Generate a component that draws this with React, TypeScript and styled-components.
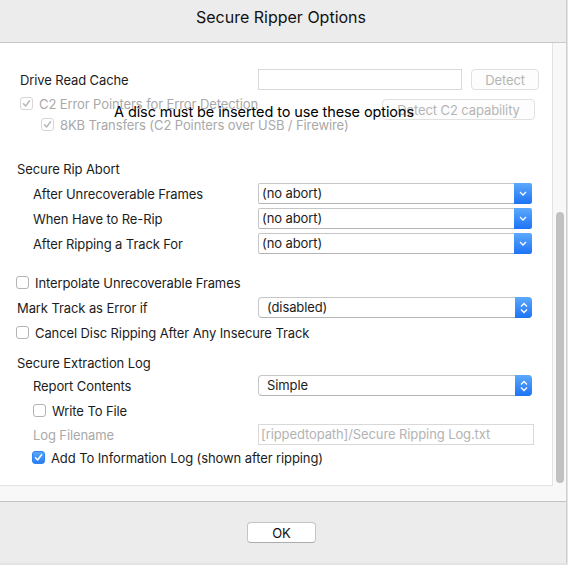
import styled, { createGlobalStyle } from 'styled-components';

const GlobalStyle = createGlobalStyle`
  html, body {
    margin: 0;
    padding: 0;
    background: #e4e4e4;
  }
  body {
    font-family: Inter, "Liberation Sans", sans-serif;
    font-size: 13px;
    letter-spacing: -0.1px;
    color: #1c1c1c;
  }
`

const Window = styled.div`
  width: 566px;
  height: 563px;
  background: #ececec;
  display: flex;
  flex-direction: column;
  box-shadow: 0 1px 0 #a9a9a9, 1px 0 0 #cfcfcf;
`

const TitleBar = styled.div`
  height: 43px;
  box-sizing: border-box;
  border-bottom: 1px solid #c9c9c9;
  display: flex;
  justify-content: center;
  padding: 8px 4px 0 0;
  font-size: 16px;
  line-height: 19px;
  letter-spacing: 0;
  color: #111;
`

const Body = styled.div`
  height: 459px;
  box-sizing: border-box;
  display: flex;
  background: #f8f8f8;
  border-bottom: 1px solid #c4c4c4;
`

const Document = styled.div`
  position: relative;
  width: 553px;
  height: 443px;
  box-sizing: border-box;
  background: #fff;
  border-right: 1px solid #e3e3e3;
  border-bottom: 1px solid #e3e3e3;
  padding-top: 26px;
`

const Track = styled.div`
  flex: 1;
  padding: 169px 0 0 3px;
`

const Knob = styled.div`
  width: 8px;
  height: 271px;
  border-radius: 4px;
  background: #c1c1c1;
`

const Footer = styled.div`
  flex: 1;
  display: flex;
  align-items: center;
  justify-content: center;
  padding-right: 3px;
`

const Row = styled.div<{ $gap?: number }>`
  display: grid;
  grid-template-columns: 258px auto;
  align-items: center;
  height: 21px;
  margin-top: ${({ $gap }) => $gap ?? 4}px;
`

const Label = styled.div<{ $indent: number; $muted?: boolean }>`
  padding-left: ${({ $indent }) => $indent}px;
  color: ${({ $muted }) => ($muted ? '#a9a9a9' : '#1c1c1c')};
  white-space: nowrap;
`

const CheckRow = styled.label<{ $indent: number; $muted?: boolean }>`
  grid-column: 1 / -1;
  display: flex;
  align-items: center;
  gap: 6px;
  padding-left: ${({ $indent }) => $indent}px;
  color: ${({ $muted }) => ($muted ? '#a9a9a9' : '#1c1c1c')};
  white-space: nowrap;
`

const Box = styled.span<{ $checked?: boolean; $muted?: boolean }>`
  width: 13px;
  height: 13px;
  box-sizing: border-box;
  border-radius: 3px;
  display: inline-flex;
  align-items: center;
  justify-content: center;
  flex: none;
  border: 1px solid
    ${({ $checked, $muted }) => ($muted ? '#d6d6d6' : $checked ? '#2f83f2' : '#b4b4b4')};
  background: ${({ $checked, $muted }) =>
    $checked && !$muted ? 'linear-gradient(#5aa6fb, #2a7ef2)' : '#fff'};
`

const Controls = styled.div`
  display: flex;
  align-items: center;
  gap: 9px;
`

const Field = styled.div<{ $width: number }>`
  width: ${({ $width }) => $width}px;
  height: 21px;
  box-sizing: border-box;
  border: 1px solid #d9d9d9;
  background: #fff;
  padding-left: 2px;
  line-height: 19px;
  color: #b3b3b3;
  white-space: nowrap;
  overflow: hidden;
`

const GhostButton = styled.button<{ $width: number }>`
  width: ${({ $width }) => $width}px;
  height: 21px;
  border: 1px solid #e0e0e0;
  border-radius: 4px;
  background: #fdfdfd;
  color: #b5b5b5;
  font: inherit;
  letter-spacing: inherit;
  padding: 0;
`

const Popup = styled.div<{ $rounded?: boolean }>`
  position: relative;
  width: 274px;
  height: 21px;
  box-sizing: border-box;
  border: 1px solid #c6c6c6;
  border-bottom-color: #b4b4b4;
  border-radius: ${({ $rounded }) => ($rounded ? '4px' : '2px')};
  background: #fff;
  padding-left: ${({ $rounded }) => ($rounded ? '8px' : '3px')};
  line-height: 19px;
  color: #1c1c1c;
`

const Arrow = styled.span<{ $rounded?: boolean }>`
  position: absolute;
  top: -1px;
  right: -1px;
  bottom: -1px;
  width: ${({ $rounded }) => ($rounded ? '17px' : '18px')};
  border-radius: ${({ $rounded }) => ($rounded ? '0 4px 4px 0' : '0 3px 3px 0')};
  background: linear-gradient(#5ca9fd, #1d73f4);
  display: flex;
  align-items: center;
  justify-content: center;
`

const Overlay = styled.div`
  position: absolute;
  left: 114px;
  top: 60px;
  font-size: 14.5px;
  line-height: 18px;
  letter-spacing: -0.1px;
  color: #000;
  white-space: nowrap;
`

const C2Button = styled(GhostButton)`
  position: absolute;
  left: 382px;
  top: 56px;
  height: 21px;
`

const OkButton = styled.button`
  width: 69px;
  height: 21px;
  border: 1px solid #c4c4c4;
  border-bottom-color: #acacac;
  border-radius: 4px;
  background: #fff;
  font: inherit;
  color: #111;
  padding: 0;
`

function Check({ checked, muted }: { checked?: boolean; muted?: boolean }) {
  return (
    <Box $checked={checked} $muted={muted}>
      {checked && (
        <svg width="9" height="9" viewBox="0 0 9 9">
          <path
            d="M1.5 4.8 L3.6 7 L7.6 1.8"
            fill="none"
            stroke={muted ? '#b8b8b8' : '#fff'}
            strokeWidth="1.5"
            strokeLinecap="round"
            strokeLinejoin="round"
          />
        </svg>
      )}
    </Box>
  )
}

function PullDown({ value }: { value: string }) {
  return (
    <Popup>
      {value}
      <Arrow>
        <svg width="8" height="5" viewBox="0 0 8 5">
          <path d="M1 1 L4 4 L7 1" fill="none" stroke="#fff" strokeWidth="1.3" />
        </svg>
      </Arrow>
    </Popup>
  )
}

function PopUp({ value }: { value: string }) {
  return (
    <Popup $rounded>
      {value}
      <Arrow $rounded>
        <svg width="8" height="12" viewBox="0 0 8 12">
          <path
            d="M1 4.5 L4 1.5 L7 4.5 M1 7.5 L4 10.5 L7 7.5"
            fill="none"
            stroke="#fff"
            strokeWidth="1.3"
          />
        </svg>
      </Arrow>
    </Popup>
  )
}

export default function App() {
  return (
    <>
      <GlobalStyle />
      <Window>
        <TitleBar>Secure Ripper Options</TitleBar>
        <Body>
          <Document>
            <Row $gap={0}>
              <Label $indent={20}>Drive Read Cache</Label>
              <Controls>
                <Field $width={204} />
                <GhostButton $width={68}>Detect</GhostButton>
              </Controls>
            </Row>
            <Row $gap={3}>
              <CheckRow $indent={20} $muted>
                <Check checked muted />
                C2 Error Pointers for Error Detection
              </CheckRow>
            </Row>
            <Row $gap={0}>
              <CheckRow $indent={41} $muted>
                <Check checked muted />
                8KB Transfers (C2 Pointers over USB / Firewire)
              </CheckRow>
            </Row>
            <C2Button $width={153}>Detect C2 capability</C2Button>
            <Overlay>A disc must be inserted to use these options</Overlay>

            <Row $gap={23}>
              <Label $indent={17}>Secure Rip Abort</Label>
            </Row>
            <Row>
              <Label $indent={33}>After Unrecoverable Frames</Label>
              <PullDown value="(no abort)" />
            </Row>
            <Row>
              <Label $indent={33}>When Have to Re-Rip</Label>
              <PullDown value="(no abort)" />
            </Row>
            <Row>
              <Label $indent={33}>After Ripping a Track For</Label>
              <PullDown value="(no abort)" />
            </Row>

            <Row $gap={18}>
              <CheckRow $indent={16}>
                <Check />
                Interpolate Unrecoverable Frames
              </CheckRow>
            </Row>
            <Row>
              <Label $indent={17}>Mark Track as Error if</Label>
              <PopUp value="(disabled)" />
            </Row>
            <Row>
              <CheckRow $indent={16}>
                <Check />
                Cancel Disc Ripping After Any Insecure Track
              </CheckRow>
            </Row>

            <Row $gap={9}>
              <Label $indent={17}>Secure Extraction Log</Label>
            </Row>
            <Row $gap={2}>
              <Label $indent={33}>Report Contents</Label>
              <PopUp value="Simple" />
            </Row>
            <Row>
              <CheckRow $indent={33}>
                <Check />
                Write To File
              </CheckRow>
            </Row>
            <Row $gap={3}>
              <Label $indent={33} $muted>Log Filename</Label>
              <Field $width={276}>[rippedtopath]/Secure Ripping Log.txt</Field>
            </Row>
            <Row $gap={2}>
              <CheckRow $indent={32}>
                <Check checked />
                Add To Information Log (shown after ripping)
              </CheckRow>
            </Row>
          </Document>
          <Track>
            <Knob />
          </Track>
        </Body>
        <Footer>
          <OkButton>OK</OkButton>
        </Footer>
      </Window>
    </>
  )
}
